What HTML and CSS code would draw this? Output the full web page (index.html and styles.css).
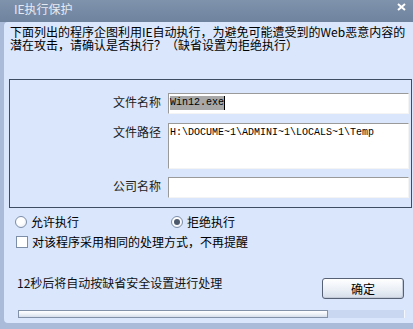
FILE: index.html
```html
<!DOCTYPE html>
<html>
  <head>
    <meta charset="utf-8">
    <title>IE执行保护</title>
    <link rel="stylesheet" href="styles.css">
  </head>
  <body>
    <div id="window">
      <div id="titlebar">
        <span class="title">IE执行保护</span>
        <svg class="close" width="9" height="8" viewBox="0 0 9 8">
          <path d="M1 1 L8 7 M8 1 L1 7" stroke="#fff" stroke-width="2" fill="none"/>
        </svg>
      </div>
      <div id="content">
        <p class="intro">下面列出的程序企图利用IE自动执行，为避免可能遭受到的Web恶意内容的<br>潜在攻击，请确认是否执行？（缺省设置为拒绝执行）</p>

        <div class="panel">
          <span class="field-label">文件名称</span>
          <div class="field short"><span class="selected">Win12.exe</span><span class="caret"></span></div>

          <span class="field-label">文件路径</span>
          <div class="field tall">H:\DOCUME~1\ADMINI~1\LOCALS~1\Temp</div>

          <span class="field-label">公司名称</span>
          <div class="field short"></div>
        </div>

        <div class="choices">
          <label class="choice allow"><span class="radio"></span>允许执行</label>
          <label class="choice"><span class="radio checked"></span>拒绝执行</label>
        </div>

        <label class="remember"><span class="checkbox"></span>对该程序采用相同的处理方式，不再提醒</label>

        <div class="footer">
          <span class="countdown">12秒后将自动按缺省安全设置进行处理</span>
          <button class="ok">确定</button>
        </div>

        <div class="progress">
          <div class="progress-fill" style="width: 310px;"></div>
        </div>
      </div>
    </div>
  </body>
</html>
```

FILE: styles.css
```css
body {
  margin: 0;
  background: #a9bbd9;
}

#window {
  width: 413px;
  height: 329px;
  display: flex;
  flex-direction: column;
  background: #a9bbd9;
  font-family: "Noto Sans CJK SC", "Liberation Sans", sans-serif;
  font-size: 12px;
  line-height: 13px;
  color: #000;
  overflow: hidden;
}

#titlebar {
  height: 22px;
  flex: none;
  display: flex;
  align-items: flex-start;
  justify-content: space-between;
  padding: 2px 7px 0 14px;
  box-sizing: border-box;
  background: linear-gradient(#8093ad, #6f829e);
}

.title {
  color: #e4eaf4;
  line-height: 13px;
}

.close {
  margin-top: 1px;
}

#content {
  flex: 1;
  margin: 0 0 6px 4px;
  background: #d9e6fb;
  border-radius: 4px 0 0 4px;
  display: flex;
  flex-direction: column;
}

.intro {
  margin: 0;
  padding: 3px 0 0 6px;
}

.panel {
  margin: 28px 1px 0 5px;
  border: 1px solid #3f4d63;
  padding: 13px 2px 9px 0;
  display: grid;
  grid-template-columns: 151px 1fr;
  column-gap: 7px;
  row-gap: 9px;
}

.field-label {
  text-align: right;
  color: #222;
  padding-top: 2px;
}

.field {
  background: #fff;
  border-top: 1px solid #9a9a9a;
  border-left: 1px solid #9a9a9a;
  border-right: 1px solid #f4f4f4;
  border-bottom: 1px solid #f4f4f4;
  box-sizing: border-box;
  font-family: "Liberation Mono", monospace;
  font-size: 10px;
  line-height: 14px;
  padding: 2px 0 0 1px;
}

.short {
  height: 21px;
}

.tall {
  height: 46px;
  margin-bottom: -1px;
}

.selected {
  background: #a8a8a8;
  display: inline-block;
}

.caret {
  display: inline-block;
  width: 1px;
  height: 14px;
  background: #000;
  vertical-align: top;
}

.choices {
  display: flex;
  margin: 8px 0 0 11px;
}

.choice {
  display: flex;
  align-items: center;
  gap: 4px;
  line-height: 12px;
}

.allow {
  width: 156px;
}

.radio {
  width: 12px;
  height: 12px;
  box-sizing: border-box;
  border: 1px solid #7d8ea8;
  border-radius: 50%;
  background: radial-gradient(circle at 40% 35%, #fff 40%, #e2e7ef);
  display: flex;
  align-items: center;
  justify-content: center;
}

.radio.checked::after {
  content: "";
  width: 6px;
  height: 6px;
  border-radius: 50%;
  background: #4d596d;
}

.remember {
  display: flex;
  align-items: center;
  gap: 4px;
  margin: 8px 0 0 12px;
  line-height: 12px;
}

.checkbox {
  width: 12px;
  height: 12px;
  box-sizing: border-box;
  border: 1px solid #7d8ea8;
  background: #fff;
}

.footer {
  display: flex;
  justify-content: space-between;
  align-items: flex-start;
  margin: 28px 9px 0 13px;
}

.countdown {
  color: #111;
}

.ok {
  margin-top: 2px;
  width: 82px;
  height: 21px;
  padding: 0;
  border: 1px solid #566176;
  border-radius: 3px;
  background: linear-gradient(#ffffff, #e9eef5 60%, #d6dde9);
  box-shadow: inset -1px -1px 0 #c4ccd9;
  font-family: "Noto Sans CJK SC", sans-serif;
  font-size: 12px;
  color: #000;
}

.progress {
  margin: 11px 8px 0 14px;
  height: 8px;
  background: #c9d8f0;
  border-right: 1px solid #f4f8fe;
}

.progress-fill {
  height: 8px;
  box-sizing: border-box;
  border: 1px solid #8391a9;
  background: linear-gradient(#ffffff, #eef2f8 50%, #d6deea);
}
```
